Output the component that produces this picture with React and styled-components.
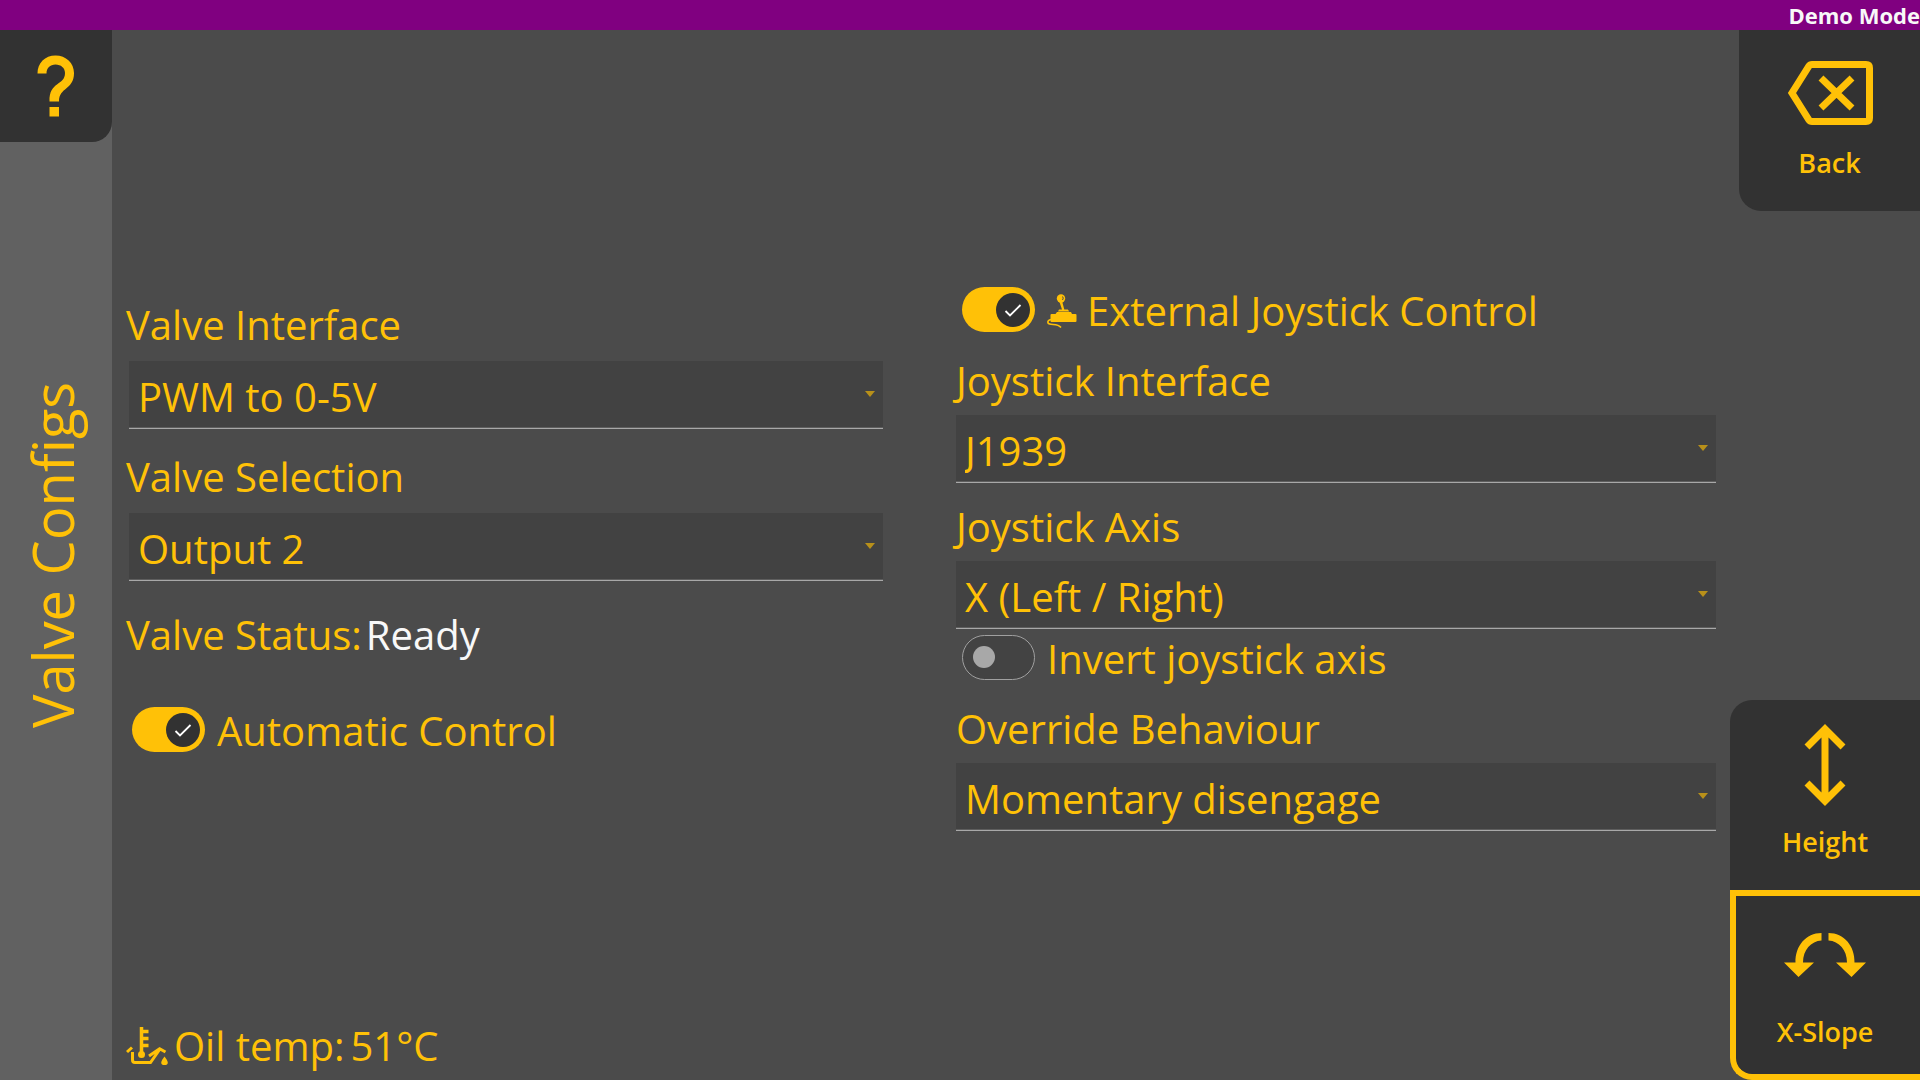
import React, { useState } from "react";
import styled, { createGlobalStyle, css } from "styled-components";

const GlobalStyle = createGlobalStyle`
  * {
    box-sizing: border-box;
  }
  body {
    margin: 0;
    background: #4b4b4b;
    color: #ffc107;
    font-family: "Segoe UI", "Open Sans", "Noto Sans", sans-serif;
    font-size: 40px;
    line-height: 56px;
  }
`;

const Screen = styled.div`
  min-height: 100vh;
  display: flex;
  flex-direction: column;
`;

const Banner = styled.header`
  height: 30px;
  background: #800080;
  color: #f8f8f8;
  font-size: 22px;
  font-weight: 700;
  line-height: 30px;
  text-align: right;
`;

const Body = styled.div`
  flex: 1;
  display: flex;
`;

const Sidebar = styled.aside`
  width: 112px;
  display: flex;
  flex-direction: column;
  background: #616161;
`;

const HelpButton = styled.button`
  height: 112px;
  display: flex;
  align-items: center;
  justify-content: center;
  border: 0;
  padding: 0;
  border-radius: 0 0 20px 0;
  background: #323232;
  color: inherit;
  cursor: pointer;
`;

const Title = styled.h1`
  flex: 1;
  margin: 0;
  padding: 112px 0 0 8px;
  display: flex;
  align-items: center;
  justify-content: center;
  writing-mode: vertical-rl;
  transform: rotate(180deg);
  font-size: 56px;
  font-weight: 400;
  line-height: 72px;
`;

const Main = styled.main`
  flex: 1;
  display: grid;
  grid-template-columns: 1fr 1fr;
  column-gap: 70px;
  padding: 0 14px;
`;

const Column = styled.section`
  display: flex;
  flex-direction: column;
  padding-top: ${({ $top }) => $top}px;
`;

const FieldBox = styled.div`
  display: flex;
  flex-direction: column;
  gap: ${({ $gap }) => $gap}px;
  margin-bottom: ${({ $after }) => $after}px;
`;

const SelectWrap = styled.div`
  position: relative;
  margin: 0 ${({ $inset }) => $inset}px;
  svg {
    position: absolute;
    right: 8px;
    top: 30px;
    pointer-events: none;
  }
`;

const Select = styled.select`
  display: block;
  width: 100%;
  height: 68px;
  padding: 4px 32px 0 9px;
  appearance: none;
  border: 0;
  border-bottom: 1px solid #a8a8a8;
  border-radius: 0;
  background: #424242;
  box-shadow: inset 0 -1px 0 #5e5e5e;
  color: inherit;
  font: inherit;
`;

const ValueRow = styled.div`
  display: flex;
  align-items: center;
  gap: 6px;
`;

const StatusRow = styled(ValueRow)`
  gap: 4px;
  margin-bottom: 40px;
`;

const Value = styled.span`
  color: #f8f8f8;
`;

const SwitchRow = styled.label`
  display: flex;
  align-items: center;
  gap: 12px;
  padding-left: 6px;
  margin-bottom: ${({ $after = 0 }) => $after}px;
  cursor: pointer;
`;

const Track = styled.span`
  position: relative;
  display: flex;
  margin-bottom: 4px;
  svg {
    position: absolute;
    top: 6px;
    right: 5px;
    pointer-events: none;
  }
`;

const offTrack = css`
  border: 1px solid #a0a0a0;
  background: #434343;
  &::before {
    content: "";
    width: 22px;
    height: 22px;
    margin-left: 10px;
    border-radius: 50%;
    background: #a8a8a8;
  }
`;

const SwitchInput = styled.input`
  appearance: none;
  display: flex;
  align-items: center;
  width: 73px;
  height: 45px;
  margin: 0;
  border-radius: 23px;
  background: #ffc107;
  cursor: pointer;
  ${({ checked }) => !checked && offTrack}
`;

const IconLabel = styled.span`
  display: flex;
  align-items: center;
  gap: 10px;
`;

const OilTemp = styled(ValueRow)`
  margin-top: auto;
  margin-bottom: 6px;
`;

const Rail = styled.nav`
  width: 190px;
  display: flex;
  flex-direction: column;
  align-items: flex-end;
`;

const RailButton = styled.button`
  width: ${({ $size }) => $size}px;
  height: ${({ $size }) => $size}px;
  display: flex;
  flex-direction: column;
  align-items: center;
  justify-content: space-between;
  padding: ${({ $active }) => ($active ? "18px 6px 22px 0" : "24px 0 28px")};
  border: 0 solid #ffc107;
  border-width: ${({ $active }) => ($active ? "6px 0 6px 6px" : "0")};
  border-radius: ${({ $corner }) =>
    $corner === "top" ? "22px 0 0 0" : "0 0 0 22px"};
  background: #323232;
  color: inherit;
  font-family: inherit;
  font-size: 27px;
  font-weight: 600;
  line-height: 40px;
  cursor: pointer;
`;

const ModeGroup = styled.div`
  margin-top: auto;
`;

const HelpIcon = () => (
  <svg width="38" height="62" viewBox="0 0 38 62" fill="currentColor">
    <path d="M0.500 18.500C0.500 8 8 0.500 18.500 0.500S37 8 37 18C37 35 22 32 22 46.500H12.500C12 26 28 31 28 18C28 13 24 9.500 18.500 9.500S9.500 13 9.500 18.500Z" />
    <path d="M12.500 52h9.500v9.500h-9.500z" />
  </svg>
);

const BackIcon = () => (
  <svg width="86" height="76" viewBox="0 -7 86 76" fill="none" stroke="currentColor" strokeWidth="7">
    <path d="M25 3.500H79Q82.500 3.500 82.500 7V57Q82.500 60.500 79 60.500H25Q23 60.500 22 59L5 32L22 5Q23 3.500 25 3.500Z" />
    <path d="M34 17L65 47M65 17L34 47" />
  </svg>
);

const HeightIcon = () => (
  <svg width="42" height="82" viewBox="0 0 42 82" fill="none" stroke="currentColor" strokeWidth="7">
    <path d="M21 5V77M3 23L21 5L39 23M3 59L21 77L39 59" />
  </svg>
);

const SlopeIcon = () => (
  <svg width="82" height="82" viewBox="0 0 82 82" fill="currentColor">
    <path d="M37.500 19V26.500C27 27 19 36 19 48.500H30L14.500 63L0 48.500H11.500C11 32 22 19 37.500 19Z" />
    <path d="M44.500 19V26.500C55 27 63 36 63 48.500H52L67.500 63L82 48.500H70.500C71 32 60 19 44.500 19Z" />
  </svg>
);

const CheckIcon = () => (
  <svg width="34" height="34" viewBox="0 0 34 34" fill="none">
    <circle cx="17" cy="17" r="17" fill="#323232" />
    <path d="M9.500 18L14 22.500L24.500 12" stroke="#fff" strokeWidth="1.800" />
  </svg>
);

const CaretIcon = () => (
  <svg width="10" height="6" viewBox="0 0 10 6" fill="#b8901a">
    <path d="M0 0H10L5 6Z" />
  </svg>
);

const JoystickIcon = () => (
  <svg width="30" height="34" viewBox="0 0 30 34" fill="currentColor">
    <circle cx="14" cy="4.500" r="4.200" />
    <path d="M15.500 2.500q1.500 1.500 0 3.500" fill="none" stroke="#4b4b4b" strokeWidth="1" />
    <path d="M12.500 8h2.800l2 7.500h3.500l1.500 2H11l1-2h3Z" />
    <path d="M10 18H24L25 20H28.500q1 0 1 1v6q0 1-1 1H4.500q-1 0-1-1V21q0-1 1-1H8.500Z" />
    <path d="M4 25.500C-0.500 26.500 0 30 4 30.300S11.500 30 14 33.500" fill="none" stroke="currentColor" strokeWidth="1.500" />
  </svg>
);

const OilIcon = () => (
  <svg width="42" height="40" viewBox="0 0 42 40" fill="none" stroke="currentColor" strokeWidth="3">
    <path d="M15.500 1V28M15.500 5.500h7M15.500 12.500h7M15.500 19.500h7" strokeWidth="3.500" />
    <circle cx="15.500" cy="28.500" r="3.500" fill="currentColor" stroke="none" />
    <path d="M1 26L6 21.500M6.500 26V34Q6.500 36.500 9 36.500H24.500L34 23L39.500 26M23 30L34 22.500" />
    <path d="M38.500 30.500q-6.500 8 0 8.500q6.500-.500 0-8.500Z" fill="currentColor" stroke="none" />
  </svg>
);

function Field({ id, label, options, gap = 6, after = 16, inset = 0 }) {
  return (
    <FieldBox $gap={gap} $after={after}>
      <label htmlFor={id}>{label}</label>
      <SelectWrap $inset={inset}>
        <Select id={id}>
          {options.map((option) => (
            <option key={option}>{option}</option>
          ))}
        </Select>
        <CaretIcon />
      </SelectWrap>
    </FieldBox>
  );
}

function Switch({ initial, after, children }) {
  const [on, setOn] = useState(initial);
  return (
    <SwitchRow $after={after}>
      <Track>
        <SwitchInput
          type="checkbox"
          role="switch"
          checked={on}
          onChange={(e) => setOn(e.target.checked)}
        />
        {on && <CheckIcon />}
      </Track>
      {children}
    </SwitchRow>
  );
}

export default function App() {
  const [mode, setMode] = useState("slope");

  return (
    <Screen>
      <GlobalStyle />
      <Banner>Demo Mode</Banner>
      <Body>
        <Sidebar>
          <HelpButton type="button" aria-label="Help">
            <HelpIcon />
          </HelpButton>
          <Title>Valve Configs</Title>
        </Sidebar>
        <Main>
          <Column $top={267}>
            <Field
              id="valve-interface"
              label="Valve Interface"
              options={["PWM to 0-5V"]}
              gap={8}
              after={20}
              inset={3}
            />
            <Field
              id="valve-selection"
              label="Valve Selection"
              options={["Output 2"]}
              gap={8}
              after={26}
              inset={3}
            />
            <StatusRow>
              <span>Valve Status:</span>
              <Value>Ready</Value>
            </StatusRow>
            <Switch initial>Automatic Control</Switch>
            <OilTemp>
              <OilIcon />
              <span>Oil temp:</span>
              <span>51°C</span>
            </OilTemp>
          </Column>
          <Column $top={253}>
            <Switch initial after={14}>
              <IconLabel>
                <JoystickIcon />
                External Joystick Control
              </IconLabel>
            </Switch>
            <Field id="joystick-interface" label="Joystick Interface" options={["J1939"]} />
            <Field
              id="joystick-axis"
              label="Joystick Axis"
              options={["X (Left / Right)"]}
              after={2}
            />
            <Switch initial={false} after={14}>
              Invert joystick axis
            </Switch>
            <Field
              id="override-behaviour"
              label="Override Behaviour"
              options={["Momentary disengage"]}
            />
          </Column>
        </Main>
        <Rail>
          <RailButton type="button" $size={181} $corner="bottom">
            <BackIcon />
            Back
          </RailButton>
          <ModeGroup>
            <RailButton
              type="button"
              $size={190}
              $corner="top"
              $active={mode === "height"}
              onClick={() => setMode("height")}
            >
              <HeightIcon />
              Height
            </RailButton>
            <RailButton
              type="button"
              $size={190}
              $corner="bottom"
              $active={mode === "slope"}
              onClick={() => setMode("slope")}
            >
              <SlopeIcon />
              X-Slope
            </RailButton>
          </ModeGroup>
        </Rail>
      </Body>
    </Screen>
  );
}
